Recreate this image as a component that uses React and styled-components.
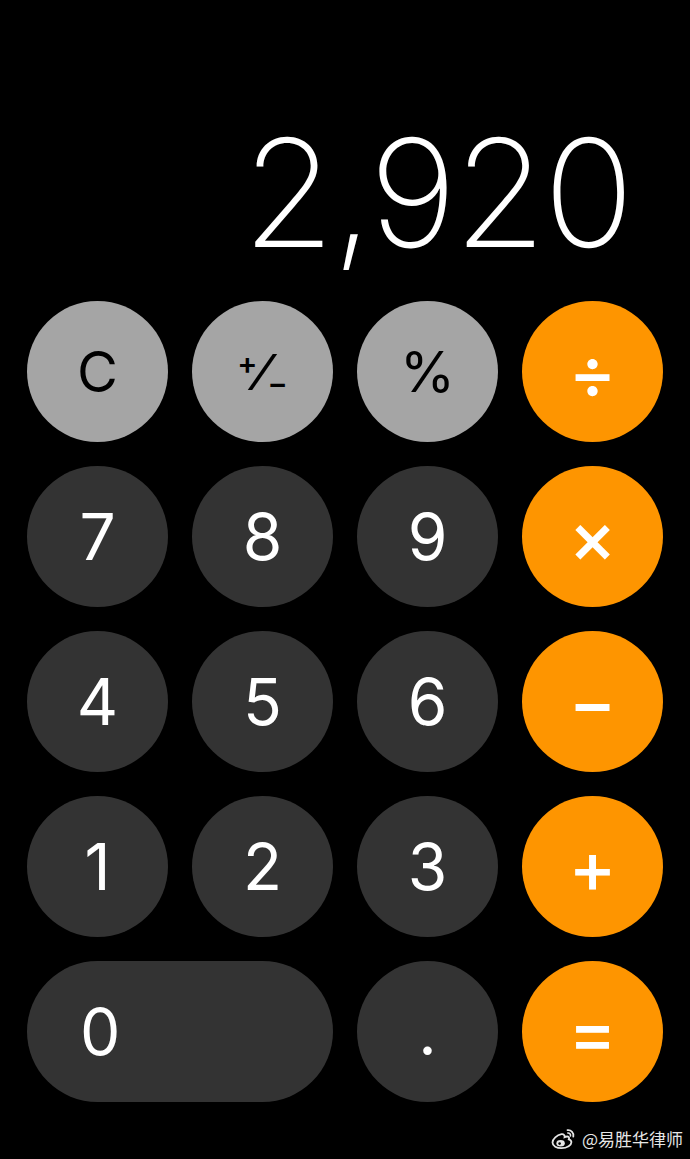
import styled, { createGlobalStyle } from 'styled-components'

const GlobalStyle = createGlobalStyle`
  html, body {
    margin: 0;
    padding: 0;
    background: #000;
  }
  body {
    font-family: Inter, "Noto Sans", sans-serif;
  }
`;

const COLORS = {
  fn: { bg: '#a5a5a5', fg: '#000' },
  num: { bg: '#333333', fg: '#fff' },
  op: { bg: '#fe9500', fg: '#fff' },
};

const keys = [
  { label: 'C', kind: 'fn' },
  { label: 'sign', kind: 'fn' },
  { label: '%', kind: 'fn' },
  { label: '÷', kind: 'op' },
  { label: '7', kind: 'num' },
  { label: '8', kind: 'num' },
  { label: '9', kind: 'num' },
  { label: '×', kind: 'op' },
  { label: '4', kind: 'num' },
  { label: '5', kind: 'num' },
  { label: '6', kind: 'num' },
  { label: '−', kind: 'op' },
  { label: '1', kind: 'num' },
  { label: '2', kind: 'num' },
  { label: '3', kind: 'num' },
  { label: '+', kind: 'op' },
  { label: '0', kind: 'num', wide: true },
  { label: '.', kind: 'num' },
  { label: '=', kind: 'op' },
];

function WeiboLogo() {
  return (
    <svg width="28" height="22" viewBox="0 0 28 22" fill="none">
      <path
        d="M11.5 6.2c-4.6.9-9 4.6-9 8.4 0 3.4 4.2 5.6 8.9 5.6 5.9 0 10-3.3 10-6 0-1.8-1.6-2.5-2.6-2.8.6-1.5.4-2.7-1.4-2.9-1.3-.1-2.8.6-2.8.6.3-1.9-.9-3.3-3.1-2.9z"
        stroke="#e6e6e6"
        strokeWidth="1.8"
      />
      <ellipse cx="10.6" cy="15.2" rx="4.2" ry="3.2" fill="#e6e6e6" />
      <circle cx="9.6" cy="15.6" r="1.3" fill="#000" />
      <path d="M17.5 2.2c3.6-.4 6.6 2.6 5.8 6.4" stroke="#e6e6e6" strokeWidth="1.8" strokeLinecap="round" />
      <path d="M17.8 5c1.7-.2 3 1.2 2.7 2.9" stroke="#e6e6e6" strokeWidth="1.6" strokeLinecap="round" />
    </svg>
  );
}

function PlusMinus() {
  return (
    <Sign>
      <sup>+</sup>
      <span>⁄</span>
      <sub>−</sub>
    </Sign>
  );
}

export default function App() {
  return (
    <>
      <GlobalStyle />
      <Page>
        <Display>
          <Value>2,920</Value>
        </Display>
        <Keypad>
          {keys.map((k) => (
            <Key key={k.label} $kind={k.kind} $wide={k.wide}>
              {k.label === 'sign' ? <PlusMinus /> : k.label}
            </Key>
          ))}
        </Keypad>
        <Watermark>
          <WeiboLogo />
          <span>@易胜华律师</span>
        </Watermark>
      </Page>
    </>
  );
}

const Page = styled.div`
  width: 690px;
  height: 1159px;
  background: #000;
  display: flex;
  flex-direction: column;
  overflow: hidden;
`;

const Display = styled.div`
  height: 301px;
  box-sizing: border-box;
  display: flex;
  align-items: flex-end;
  justify-content: flex-end;
  padding: 0 59px 33px 0;
`;

const Value = styled.div`
  color: #fff;
  font-family: Inter, "Noto Sans", sans-serif;
  font-weight: 200;
  font-size: 150px;
  line-height: 1;
  letter-spacing: -3px;
`;

const Keypad = styled.div`
  display: grid;
  grid-template-columns: repeat(4, 141px);
  grid-auto-rows: 141px;
  column-gap: 24px;
  row-gap: 24px;
  padding-left: 27px;
`;

const Key = styled.button`
  border: none;
  margin: 0;
  padding: ${(p) => (p.$wide ? '0 0 0 53px' : '0')};
  border-radius: 71px;
  grid-column: ${(p) => (p.$wide ? 'span 2' : 'auto')};
  background: ${(p) => COLORS[p.$kind].bg};
  color: ${(p) => COLORS[p.$kind].fg};
  display: flex;
  align-items: center;
  justify-content: ${(p) => (p.$wide ? 'flex-start' : 'center')};
  font-family: Inter, "Noto Sans", sans-serif;
  font-size: ${(p) => (p.$kind === 'op' ? '72px' : p.$kind === 'fn' ? '56px' : '64px')};
  font-weight: ${(p) => (p.$kind === 'op' ? 500 : 400)};
  line-height: 1;
`;

const Sign = styled.span`
  display: flex;
  align-items: center;
  height: 44px;
  font-size: 50px;
  font-weight: 500;

  span {
    line-height: 44px;
  }
  sup, sub {
    font-size: 30px;
    line-height: 1;
    font-weight: 600;
  }
  sup {
    align-self: flex-start;
    margin-top: -2px;
  }
  sub {
    align-self: flex-end;
    margin-bottom: -4px;
  }
`;

const Watermark = styled.div`
  margin-top: auto;
  align-self: flex-end;
  display: flex;
  align-items: center;
  gap: 4px;
  padding: 0 7px 8px 0;
  color: #e6e6e6;
  font-family: "Noto Sans CJK SC", sans-serif;
  font-size: 17px;
`;
